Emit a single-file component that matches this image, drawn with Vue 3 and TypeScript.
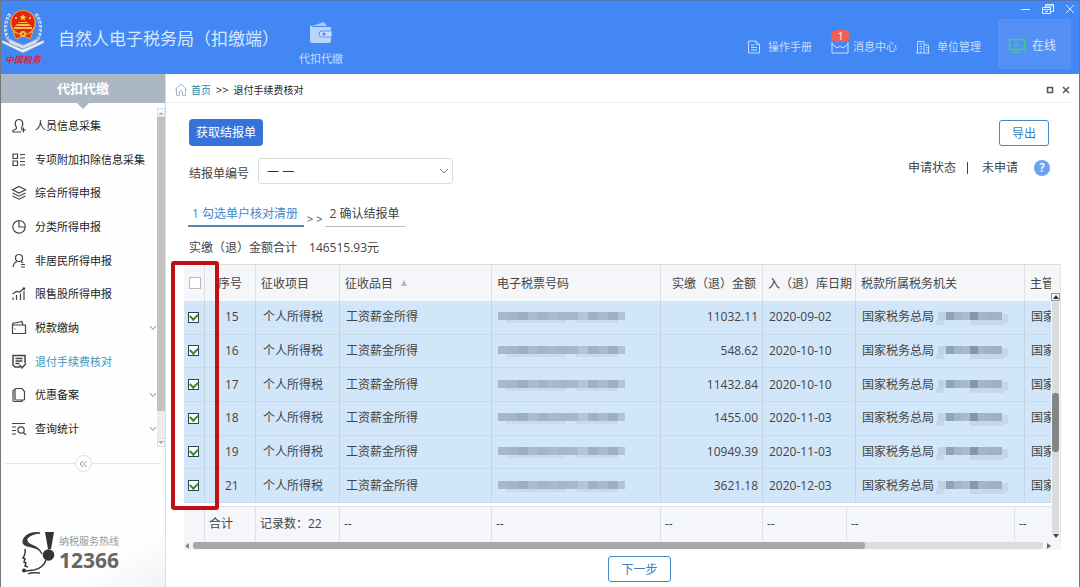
<script setup lang="ts">
import { ref } from 'vue'

interface MenuItem {
  key: string
  label: string
  expandable?: boolean
}

interface TaxRow {
  no: number
  amount: string
  date: string
  checked: boolean
}

const menu: MenuItem[] = [
  { key: 'person', label: '人员信息采集' },
  { key: 'deduct', label: '专项附加扣除信息采集' },
  { key: 'layers', label: '综合所得申报' },
  { key: 'pie', label: '分类所得申报' },
  { key: 'foreign', label: '非居民所得申报' },
  { key: 'stock', label: '限售股所得申报' },
  { key: 'wallet', label: '税款缴纳', expandable: true },
  { key: 'refund', label: '退付手续费核对' },
  { key: 'copy', label: '优惠备案', expandable: true },
  { key: 'query', label: '查询统计', expandable: true },
]
const active = ref('refund')

const rows = ref<TaxRow[]>([
  { no: 15, amount: '11032.11', date: '2020-09-02', checked: true },
  { no: 16, amount: '548.62', date: '2020-10-10', checked: true },
  { no: 17, amount: '11432.84', date: '2020-10-10', checked: true },
  { no: 18, amount: '1455.00', date: '2020-11-03', checked: true },
  { no: 19, amount: '10949.39', date: '2020-11-03', checked: true },
  { no: 21, amount: '3621.18', date: '2020-12-03', checked: true },
])

const ticketMask = ['#a6b8c9', '#a3b5c6', '#9cafc1', '#a9bbcc', '#a2b5c6', '#a8bacb', '#a4b6c7', '#a6b8c9', '#b3c5d6', '#9fb2c4', '#a8bacb', '#9db0c2', '#b1c3d4']
const officeMask = ['#bfd2e4', '#8fa3b6', '#a3b6c8', '#a8bbcd', '#8397ab', '#a3b6c8', '#a0b3c5', '#9fb2c4']
</script>

<template>
  <div class="window">
    <header class="top">
      <svg class="emblem" width="42" height="58" viewBox="0 0 42 58" aria-hidden="true">
        <path d="M8 5C3 11 2 22 6 30l9 6M34 5c5 6 6 17 2 25l-9 6" fill="none" stroke="#d8e2ee" stroke-width="3" stroke-dasharray="3 1" />
        <path d="M7 6C3 13 3 23 7 30M35 6c4 7 4 17 0 24" fill="none" stroke="#5f6f90" stroke-width="1" stroke-dasharray="2 2" />
        <path d="M0 31l20 9 22-9v3l-21 10L0 34z" fill="#e8f0f8" stroke="#6e8db8" stroke-width=".6" />
        <path d="M5 29l16 7 16-7-3 6-13 5-13-5z" fill="#cfdded" stroke="#7489ad" stroke-width=".6" />
        <ellipse cx="21" cy="14" rx="13" ry="13" fill="#e5a23d" />
        <ellipse cx="21" cy="13.500" rx="11.500" ry="11.500" fill="#e62413" />
        <path d="M11 23l3 7 7-3 7 3 3-7-10 3z" fill="#da3b18" stroke="#e7b745" stroke-width=".8" />
        <path d="M21 5l1 2.200 2.400.2-1.800 1.600.5 2.400-2.100-1.300-2.100 1.300.5-2.400-1.800-1.600 2.400-.2z" fill="#fcd44c" />
        <path d="M13 8h2v2h-2zM27 8h2v2h-2zM12 18h18v2H12zM15 15h12l2 2H13zM17 13h8l1 1H16z" fill="#f7c542" />
        <circle cx="21" cy="25" r="3" fill="#f5c343" />
        <circle cx="21" cy="25" r="1.300" fill="#d9481c" />
        <text x="21" y="54" class="emblem-text" text-anchor="middle">中国税务</text>
      </svg>
      <h1>自然人电子税务局（扣缴端）</h1>
      <button class="module" type="button">
        <svg width="22" height="22" viewBox="0 0 22 22" aria-hidden="true">
          <path d="M2 4l12-4 3 4z" fill="#a9cdf9" />
          <path d="M0 3l3 2h17a1 1 0 0 1 1 1v13a2 2 0 0 1-2 2H2a2 2 0 0 1-2-2z" fill="#b8d6fa" />
          <path d="M12 9h10v6H12a3 3 0 0 1 0-6z" fill="#c6defc" stroke="#5a97f6" />
          <circle cx="14" cy="12" r="1.500" fill="#4387f5" />
        </svg>
        <span>代扣代缴</span>
      </button>
      <div class="top-right">
        <div class="win-controls">
          <button type="button" aria-label="最小化"><svg width="12" height="12" viewBox="0 0 12 12"><path d="M1 6.500h9" stroke="#d9e8ff" fill="none" /></svg></button>
          <button type="button" aria-label="还原"><svg width="12" height="12" viewBox="0 0 12 12" fill="none" stroke="#e6f0ff"><path d="M.5 4.500h8v6h-8zM.5 6.500h8M3.500 4V1.500h8v7H9M3.500 3h8M3 8.500h3" /></svg></button>
          <button type="button" aria-label="关闭"><svg width="12" height="12" viewBox="0 0 12 12"><path d="M2 2l8 8M10 2l-8 8" stroke="#d9e8ff" fill="none" /></svg></button>
        </div>
        <nav class="top-nav">
          <a href="#manual">
            <svg width="14" height="14" viewBox="0 0 14 14" fill="none" stroke="#bfdcff"><path d="M1.500 1h7.500l3.500 3.500V13h-11zM9 1v3.500h3.500M4 5h3M4 7.500h6M4 10h6" /></svg>
            <span>操作手册</span>
          </a>
          <a class="message" href="#message">
            <svg width="18" height="14" viewBox="0 0 18 14" fill="none" stroke="#cfe4ff"><path d="M1 2v11h16V2M1 4l5 4 3-2 3 2 5-4" /></svg>
            <span>消息中心</span>
            <b class="badge">1</b>
          </a>
          <a href="#company">
            <svg width="14" height="14" viewBox="0 0 14 14" fill="none" stroke="#bfdcff"><path d="M1.500 13V1.500H8V13M8 5h4.500v8M0 13h14M3.500 4h2.500M3.500 6.500h2.500M3.500 9h2.500M4.500 11v2M10 7.500h1.500M10 10h1.500" /></svg>
            <span>单位管理</span>
          </a>
          <a class="online" href="#online">
            <svg width="18" height="16" viewBox="0 0 18 16" fill="none" stroke="#3fd07c" stroke-width="1.500"><path d="M1.500 1.500h15v10h-15zM6 14.500h6M9 12v2M6.500 6.500l1.500 1.500 3.500-3" /></svg>
            <span>在线</span>
          </a>
        </nav>
      </div>
    </header>

    <div class="body">
      <aside class="side">
        <h2>代扣代缴</h2>
        <div class="menu-area">
          <ul class="menu">
            <li v-for="m in menu" :key="m.key">
              <a :href="'#' + m.key" :class="{ active: active === m.key }" @click.prevent="active = m.key">
                <svg class="icon" width="16" height="16" viewBox="0 0 16 16" fill="none" stroke="#444" stroke-width="1.200" aria-hidden="true">
                  <path v-if="m.key === 'person'" d="M11 8.500C12.500 6 12 1.500 8 1.500S3.500 6 5 8.500c.8 1.300.8 2-.5 2.700L2 12.300V14h8M11 8.500c-.8 1.300-.6 2 .2 2.500M10 12h5M12.500 9.500v5" />
                  <path v-else-if="m.key === 'deduct'" d="M2 2h4.500v4.500H2zM2 9h4.500v4.500H2zM9 2.500h5M9 6h5M9 9.500h5M9 13h5" />
                  <path v-else-if="m.key === 'layers'" d="M8 1.500l6.500 3.300L8 8 1.500 4.800zM1.500 8L8 11.200 14.500 8M1.500 11L8 14.200l6.500-3.200" />
                  <path v-else-if="m.key === 'pie'" d="M8 1.500A6.300 6.300 0 0 1 14.300 8H8zM8 1.700A6.200 6.200 0 1 0 14.200 8" />
                  <g v-else-if="m.key === 'foreign'"><circle cx="8" cy="5" r="3.500" /><path d="M6 8.500c-2.300.7-3.500 2.500-4 5.500M10 8.500l2 1.500M10 11.500h4M10 14h4" /></g>
                  <path v-else-if="m.key === 'stock'" d="M2 11.500V14M5.500 9v5M9.500 7.500V14M13 5v9M1.500 8l4-2.500 3 .5L13.500 2M11.500 2h2v2" />
                  <path v-else-if="m.key === 'wallet'" d="M1.500 5h13v8.500h-13zM1.500 5l.5-2h2l7-1.500L12 5M3.500 9h1" />
                  <path v-else-if="m.key === 'refund'" d="M9 13H4l-2-2V1.500h12V9M4.500 4.500h7M4.500 7h7M4.500 9.500h4M8.500 11l2.500 2.800L15 9.500" stroke-width="1.500" />
                  <path v-else-if="m.key === 'copy'" d="M5 1.500h6l2.500 3V12a1 1 0 0 1-1 1H5a1 1 0 0 1-1-1V2.500a1 1 0 0 1 1-1zM4 3H3a1 1 0 0 0-1 1v9.500a1 1 0 0 0 1 1h8V13" />
                  <g v-else><path d="M1 2.500h13M1 6h4M1 9.500h4M1 13h4" /><circle cx="10" cy="9" r="3.200" /><path d="M12.300 11.500L15 14" /></g>
                </svg>
                <span>{{ m.label }}</span>
                <svg v-if="m.expandable" class="chev" width="8" height="6" viewBox="0 0 8 6" fill="none" stroke="#888"><path d="M1 1l3 3.500L7 1" /></svg>
              </a>
            </li>
          </ul>
          <div class="side-scroll">
            <i class="cap"><svg width="6" height="4" viewBox="0 0 6 4"><path d="M0 4l3-3 3 3z" fill="#bbb" /></svg></i>
            <i class="side-thumb"></i>
            <i class="side-track"></i>
            <i class="cap"><svg width="6" height="4" viewBox="0 0 6 4"><path d="M0 0l3 3 3-3z" fill="#aaa" /></svg></i>
          </div>
        </div>
        <div class="collapse">
          <button type="button" aria-label="收起菜单">
            <svg width="8" height="8" viewBox="0 0 8 8" fill="none" stroke="#888"><path d="M4 1L1 4l3 3M7.500 1l-3 3 3 3" /></svg>
          </button>
        </div>
        <div class="hotline">
          <svg width="34" height="44" viewBox="0 0 34 44" aria-hidden="true">
            <path d="M24 1h9l-3 17h-3z" fill="#333" />
            <circle cx="27.500" cy="24" r="5.800" fill="#333" />
            <path d="M19 2C10 0 1 5 2 12c1 5 15 2 19 11-3-9-13-8-15-13C5 6 11 3 19 2z" fill="#3a3a3a" stroke="#3a3a3a" />
            <path d="M4 18c1 4 0 6-2 9l2 1-1 3 2 1-1 3 3 1M25 29c-2 6-7 9-12 10l-9 1M7 43c3-2 7-1 12-1" fill="none" stroke="#3a3a3a" stroke-width="1.500" />
            <circle cx="3" cy="39.500" r="2" fill="#333" />
          </svg>
          <p><span>纳税服务热线</span><strong>12366</strong></p>
        </div>
      </aside>

      <main class="main">
        <div class="crumbs">
          <svg width="14" height="13" viewBox="0 0 14 13" fill="none" stroke="#a9bac8"><path d="M1 7l6-6 6 6M2.500 6v6.500H5.500V9a1.500 1.500 0 0 1 3 0v3.500h3V6" /></svg>
          <a href="#home">首页</a>
          <span class="sep">&gt;&gt;</span>
          <span>退付手续费核对</span>
          <div class="tab-controls">
            <button type="button" aria-label="最大化"><svg width="8" height="8" viewBox="0 0 8 8"><path d="M1.500 1.500h5v5h-5z" fill="none" stroke="#555" stroke-width="1.500" /></svg></button>
            <button type="button" aria-label="关闭页签"><svg width="8" height="8" viewBox="0 0 8 8"><path d="M1 1l6 6M7 1L1 7" stroke="#555" stroke-width="1.500" /></svg></button>
          </div>
        </div>

        <div class="content">
          <div class="actions">
            <button class="primary" type="button">获取结报单</button>
            <button class="outline" type="button">导出</button>
          </div>
          <div class="filter">
            <label for="report-no">结报单编号</label>
            <div class="select-wrap">
              <select id="report-no"><option>— —</option></select>
              <svg width="10" height="6" viewBox="0 0 10 6" fill="none" stroke="#777"><path d="M1 1l4 4 4-4" /></svg>
            </div>
            <div class="status">
              <span>申请状态</span><i></i><span>未申请</span>
              <button type="button" aria-label="帮助">?</button>
            </div>
          </div>
          <div class="steps">
            <a class="current" href="#step-1">1 勾选单户核对清册</a>
            <span>&gt; &gt;</span>
            <a href="#step-2">2 确认结报单</a>
          </div>
          <p class="total"><span>实缴（退）金额合计</span><span>146515.93元</span></p>

          <div class="grid-area">
            <div class="grid-view">
              <table class="list">
                <colgroup><col class="c1" /><col class="c2" /><col class="c3" /><col class="c4" /><col class="c5" /><col class="c6" /><col class="c7" /><col class="c8" /><col /></colgroup>
                <thead>
                  <tr>
                    <th class="pick"><input type="checkbox" aria-label="全选" /></th>
                    <th class="num">序号</th>
                    <th>征收项目</th>
                    <th>征收品目<svg class="sort" width="6" height="6" viewBox="0 0 6 6"><path d="M3 0l3 6H0z" fill="#b4b7bb" /></svg></th>
                    <th>电子税票号码</th>
                    <th class="amount">实缴（退）金额</th>
                    <th>入（退）库日期</th>
                    <th>税款所属税务机关</th>
                    <th>主管</th>
                  </tr>
                </thead>
                <tbody>
                  <tr v-for="r in rows" :key="r.no">
                    <td class="pick"><input v-model="r.checked" type="checkbox" :aria-label="'选择 ' + r.no" /></td>
                    <td class="num">{{ r.no }}</td>
                    <td>个人所得税</td>
                    <td>工资薪金所得</td>
                    <td>
                      <svg class="mask" width="127" height="12" viewBox="0 0 127 12" shape-rendering="crispEdges">
                        <rect v-for="(c, i) in ticketMask" :key="i" :x="i * 10" y="1" width="10" height="8" :fill="c" />
                        <path d="M8 9h60v3H8zM78 9h42v3H78z" fill="#c8dbec" />
                      </svg>
                    </td>
                    <td class="amount">{{ r.amount }}</td>
                    <td>{{ r.date }}</td>
                    <td>
                      <span class="office">国家税务总局<svg class="mask" width="74" height="16" viewBox="0 0 74 16" shape-rendering="crispEdges">
                        <rect v-for="(c, i) in officeMask" :key="i" :x="2 + i * 8" y="3" width="8" height="8" :fill="c" />
                        <path d="M0 11h8v5H0zM34 11h34v5H34zM66 5h6v9h-6z" fill="#c5d8ea" />
                      </svg></span>
                    </td>
                    <td>国家</td>
                  </tr>
                </tbody>
              </table>
              <table class="summary">
                <colgroup><col class="c1" /><col class="c2" /><col class="c3" /><col class="c4" /><col class="c5" /><col class="c6" /><col class="f7" /><col class="f8" /><col /></colgroup>
                <tbody>
                  <tr><td></td><td>合计</td><td>记录数：22</td><td>--</td><td>--</td><td>--</td><td>--</td><td>--</td><td>--</td></tr>
                </tbody>
              </table>
            </div>
            <div class="v-scroll">
              <i class="up"><svg width="6" height="4" viewBox="0 0 6 4"><path d="M0 4l3-4 3 4z" fill="#333" /></svg></i>
              <i class="v-track"><b></b></i>
              <i class="down"><svg width="6" height="4" viewBox="0 0 6 4"><path d="M0 0l3 4 3-4z" fill="#444" /></svg></i>
            </div>
            <div class="h-scroll">
              <svg width="5" height="6" viewBox="0 0 5 6"><path d="M4 0L0 3l4 3z" fill="#888" /></svg>
              <i class="h-track"><b></b></i>
              <svg width="5" height="6" viewBox="0 0 5 6"><path d="M1 0l4 3-4 3z" fill="#666" /></svg>
            </div>
            <div class="highlight"></div>
          </div>
          <div class="next"><button class="outline" type="button">下一步</button></div>
        </div>
      </main>
    </div>
  </div>
</template>

<style>
body {
  margin: 0;
}
</style>

<style scoped>
* {
  box-sizing: border-box;
}
.window {
  display: flex;
  flex-direction: column;
  min-height: 100vh;
  border: solid #777;
  border-width: 0 1px;
  background: #fff;
  color: #444;
  font: 12px/16px "Open Sans", "Noto Sans CJK SC", sans-serif;
  overflow: hidden;
}
button {
  font: inherit;
  cursor: pointer;
  padding: 0;
  border: 0;
  background: none;
}
a {
  color: inherit;
  text-decoration: none;
}
svg {
  display: block;
  flex: none;
}
h1, h2, p, ul {
  margin: 0;
  padding: 0;
  font-weight: 400;
}
i, b {
  font-style: normal;
}

.top {
  display: flex;
  height: 74px;
  background: #4387f5;
  border-top: 1px solid #5079bd;
  color: #d4e6ff;
}
.emblem {
  margin: 8px 0 0 1px;
}
.emblem-text {
  font: italic 700 9px "Noto Sans CJK SC", sans-serif;
  fill: #d8263a;
}
h1 {
  margin: 26px 0 0 14px;
  font-size: 17px;
  line-height: 24px;
  color: #d9e9ff;
}
.module {
  display: flex;
  flex-direction: column;
  align-items: center;
  align-self: flex-start;
  gap: 7px;
  margin: 21px 0 0 20px;
  font-size: 11px;
  color: #c3dcfd;
}
.top-right {
  margin-left: auto;
  display: flex;
  flex-direction: column;
}
.win-controls {
  display: flex;
  justify-content: flex-end;
  gap: 10px;
  height: 18px;
  padding: 2px 3px 0 0;
}
.win-controls button {
  height: 12px;
}
.top-nav {
  display: flex;
  align-items: center;
  padding-right: 8px;
  font-size: 11px;
  color: #c3dcfd;
}
.top-nav a {
  position: relative;
  display: flex;
  align-items: center;
  gap: 7px;
  height: 50px;
  margin-right: 19px;
  padding-top: 5px;
}
.top-nav .message {
  gap: 4px;
}
.top-nav .online {
  width: 73px;
  margin: 0 0 0 -2px;
  padding: 3px 0 0 10px;
  gap: 6px;
  background: #5490f5;
  color: #d4e6ff;
  font-size: 12px;
}
.badge {
  position: absolute;
  left: 0;
  top: 11px;
  width: 19px;
  height: 12px;
  border-radius: 6px;
  background: #f4604f;
  color: #fff;
  font: 10px/12px "Open Sans", sans-serif;
  text-align: center;
}

.body {
  display: flex;
  flex: 1;
}
.side {
  display: flex;
  flex-direction: column;
  width: 165px;
  flex: none;
  border-right: 1px solid #ddd;
  background: #fefefe;
}
h2 {
  position: relative;
  height: 29px;
  background: #abb8c3;
  color: #fff;
  font-size: 13px;
  font-weight: 700;
  line-height: 29px;
  text-align: center;
}
h2::after {
  content: "";
  position: absolute;
  left: 50%;
  top: 100%;
  margin-left: -6px;
  border: solid transparent;
  border-width: 6px 6px 0;
  border-top-color: #abb8c3;
}
.menu-area {
  display: flex;
  height: 344px;
}
.menu {
  display: flex;
  flex-direction: column;
  flex: 1;
  height: 337px;
  margin-top: 6px;
  list-style: none;
  font-size: 11px;
  color: #222;
}
.menu li {
  flex: 1;
}
.menu a {
  display: flex;
  align-items: center;
  height: 100%;
  padding-left: 10px;
  gap: 8px;
  white-space: nowrap;
}
.menu .active {
  color: #3f93b8;
}
.chev {
  margin-left: auto;
}
.side-scroll {
  display: flex;
  flex-direction: column;
  width: 8px;
  padding-top: 5px;
}
.cap {
  display: grid;
  place-items: center;
  height: 9px;
  border: 1px solid #ddd;
  background: #fafafa;
}
.side-thumb {
  flex: 11;
  background: #c2c2c2;
}
.side-track {
  flex: 1;
  background: #ececf0;
}
.collapse {
  display: flex;
  align-items: center;
  margin: 8px 4px 0;
}
.collapse::before,
.collapse::after {
  content: "";
  flex: 1;
  border-top: 1px solid #e4e4e4;
}
.collapse button {
  display: grid;
  place-items: center;
  width: 17px;
  height: 17px;
  border: 1px solid #ddd;
  border-radius: 50%;
}
.hotline {
  display: flex;
  gap: 4px;
  margin-top: auto;
  padding: 0 0 12px 20px;
  background: linear-gradient(150deg, #fefefe 60%, #f3f3f3);
}
.hotline p {
  display: flex;
  flex-direction: column;
  padding-top: 3px;
}
.hotline span {
  font-size: 10px;
  line-height: 14px;
  color: #999;
}
.hotline strong {
  font: 700 21px/24px "Noto Sans", sans-serif;
  color: #666;
}

.main {
  flex: 1;
  min-width: 0;
  display: flex;
  flex-direction: column;
}
.crumbs {
  display: flex;
  align-items: center;
  height: 29px;
  margin-right: 8px;
  padding: 3px 0 0 8px;
  border-bottom: 1px solid #eee;
  font-size: 10px;
  color: #222;
}
.crumbs a {
  margin-left: 3px;
  color: #2389a8;
}
.sep {
  margin: 0 5px;
  font-size: 11px;
}
.tab-controls {
  display: flex;
  gap: 8px;
  margin: 0 1px 0 auto;
}
.content {
  display: flex;
  flex-direction: column;
  padding: 16px 18px 0;
}
.actions,
.filter {
  display: flex;
  justify-content: space-between;
  padding: 0 12px 0 5px;
}
.primary {
  width: 74px;
  height: 27px;
  padding-top: 1px;
  border-radius: 4px;
  background: #3673d9;
  color: #fff;
}
.outline {
  height: 26px;
  padding: 2px 12px 0;
  border: 1px solid #4a86bd;
  border-radius: 3px;
  background: #fff;
  color: #3a7fc0;
}
.actions .outline {
  margin-top: 1px;
}
.filter {
  justify-content: flex-start;
  margin-top: 12px;
}
.filter label {
  padding-top: 8px;
}
.select-wrap {
  display: grid;
  width: 195px;
  margin-left: 9px;
}
.select-wrap > * {
  grid-area: 1 / 1;
}
.select-wrap svg {
  place-self: center end;
  margin-right: 4px;
  pointer-events: none;
}
select {
  appearance: none;
  height: 26px;
  padding: 0 8px;
  border: 1px solid #ddd;
  border-radius: 3px;
  background: #fff;
  color: #333;
  font: inherit;
}
.status {
  display: flex;
  align-items: center;
  height: 20px;
  margin-left: auto;
}
.status i {
  width: 1px;
  height: 12px;
  margin: 0 14px 0 11px;
  background: #444;
}
.status button {
  width: 16px;
  height: 16px;
  margin-left: 16px;
  border-radius: 50%;
  background: #68a4ef;
  color: #fff;
  font-weight: 600;
  line-height: 16px;
}
.filter .status {
  margin-right: -1px;
}
.steps {
  display: flex;
  align-items: flex-end;
  gap: 3px;
  margin: 17px 0 0 4px;
}
.steps a {
  height: 26px;
  padding: 5px 6px 0 4px;
  border-bottom: 1px solid #bbb;
}
.steps .current {
  border-bottom: 2px solid #5489b4;
  color: #4288cb;
}
.steps span {
  font-size: 11px;
}
.total {
  display: flex;
  gap: 12px;
  margin: 13px 0 8px 5px;
}

.grid-area {
  position: relative;
  display: grid;
  grid-template-columns: minmax(0, 1fr) 10px;
  border-top: 1px solid #ddd;
}
.grid-view {
  overflow: hidden;
}
table {
  width: 100%;
  min-width: 860px;
  table-layout: fixed;
  border-collapse: separate;
  border-spacing: 0;
}
.list {
  height: 238px;
}
.c1 { width: 21px; }
.c2 { width: 51px; }
.c3 { width: 84px; }
.c4 { width: 152px; }
.c5 { width: 169px; }
.c6 { width: 102px; }
.c7 { width: 93px; }
.c8 { width: 169px; }
.f7 { width: 84px; }
.f8 { width: 168px; }
th,
td {
  padding: 0 0 0 6px;
  border-right: 1px solid #dcdfe3;
  font-weight: 400;
  text-align: left;
  white-space: nowrap;
  overflow: hidden;
}
th {
  height: 36px;
  padding: 2px 0 0 5px;
  background: #f5f6f9;
}
th:last-child,
td:last-child {
  border-right: 0;
}
th.num {
  padding-left: 13px;
}
.list td {
  border-right-color: #c3d5e5;
  border-bottom: 1px solid #c6daea;
  background: #d2e6f9;
}
.list td:nth-child(3) {
  padding-left: 7px;
}
.list td.num {
  padding-left: 20px;
}
.list .amount {
  padding-right: 4px;
  text-align: right;
}
.list th.amount {
  padding-right: 6px;
}
.list .pick {
  padding: 0 0 0 4px;
}
.sort {
  display: inline-block;
  margin-left: 8px;
  vertical-align: 2px;
}
.office {
  display: flex;
  align-items: center;
  gap: 2px;
}
input {
  appearance: none;
  display: grid;
  place-items: center;
  width: 12px;
  height: 12px;
  margin: 0;
  border: 1px solid #bbb;
  background: #fff;
}
th input {
  margin-left: 1px;
}
td input {
  width: 11px;
  height: 11px;
  border-color: #2d4354;
}
input:checked::after {
  content: "";
  width: 6px;
  height: 4px;
  margin-bottom: 2px;
  border: solid #38872b;
  border-width: 0 0 2px 2px;
  transform: rotate(-45deg);
}
.summary {
  height: 35px;
  margin-top: 3px;
}
.summary td {
  padding-left: 4px;
  border-top: 1px solid #dcdfe3;
  background: #f5f6fa;
}
.v-scroll {
  display: flex;
  flex-direction: column;
  align-items: center;
  padding: 28px 0 2px;
  border-right: 1px solid #e5e5e5;
  background: #f5f6f9;
}
.up {
  display: grid;
  place-items: center;
  width: 9px;
  height: 8px;
  border: 1px solid #999;
}
.down {
  display: grid;
  place-items: center;
  height: 6px;
}
.v-track {
  flex: 1;
  width: 7px;
  padding-top: 92px;
  background: #dcdcdc;
}
.v-track b {
  display: block;
  height: 59px;
  border-radius: 3px;
  background: #858585;
}
.h-scroll {
  grid-column: 1 / -1;
  display: flex;
  align-items: center;
  gap: 3px;
  height: 9px;
  padding: 0 10px 0 1px;
  background: #f5f5f5;
}
.h-track {
  flex: 1;
  height: 7px;
  border-radius: 3px;
  background: #dcdcdc;
}
.h-track b {
  display: block;
  width: 79%;
  height: 7px;
  border-radius: 3px;
  background: #a8a8a8;
}
.highlight {
  position: absolute;
  left: -13px;
  top: -4px;
  width: 48px;
  height: 249px;
  border: 4px solid #c01015;
  border-radius: 3px;
  pointer-events: none;
}
.next {
  display: flex;
  justify-content: center;
  margin: 6px 0 5px;
  padding-left: 34px;
}
.next .outline {
  padding: 1px 12px 0;
}
</style>
